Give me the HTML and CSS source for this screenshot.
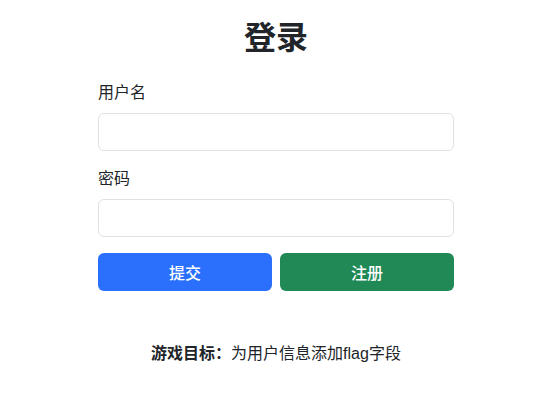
FILE: index.html
```html
<!DOCTYPE html>
<html lang="zh-CN">
<head>
    <meta charset="UTF-8">
    <meta name="viewport" content="width=device-width, initial-scale=1.0">
    <title>登录</title>
    <link rel="stylesheet" href="styles.css">
</head>
<body>

<div class="container">
    <h1 class="title">登录</h1>
    <form class="login-form" onsubmit="return false;">
        <div class="field">
            <label for="username">用户名</label>
            <input type="text" id="username" name="username">
        </div>
        <div class="field">
            <label for="password">密码</label>
            <input type="password" id="password" name="password">
        </div>
        <div class="actions">
            <button type="submit" class="btn btn-primary">提交</button>
            <button type="button" class="btn btn-success">注册</button>
        </div>
    </form>
    <p class="goal"><strong>游戏目标：</strong>为用户信息添加flag字段</p>
</div>

</body>
</html>
```

FILE: styles.css
```css
body {
    font-family: "Liberation Sans", "Noto Sans CJK SC", sans-serif;
    font-size: 16px;
    line-height: 1.5;
    color: #212529;
    background-color: #fff;
    margin: 0;
    padding: 0 4px 0 0;
}

.container {
    width: 356px;
    margin: 0 auto;
    padding-top: 19px;
}

.title {
    font-size: 32px;
    font-weight: 700;
    line-height: 1.2;
    text-align: center;
    margin: 0 0 24px 0;
}

.field {
    margin-bottom: 16px;
}

.field label {
    display: block;
    margin-bottom: 8px;
}

.field input {
    display: block;
    box-sizing: border-box;
    width: 100%;
    height: 38px;
    padding: 6px 12px;
    font-size: 16px;
    border: 1px solid #dee2e6;
    border-radius: 6px;
    outline: none;
}

.actions {
    display: flex;
    gap: 8px;
}

.btn {
    flex: 1;
    height: 38px;
    border: none;
    border-radius: 6px;
    color: #fff;
    font-family: "Liberation Sans", "Noto Sans CJK SC", sans-serif;
    font-size: 16px;
    font-weight: 500;
    cursor: pointer;
}

.btn-primary {
    background-color: #2a70fd;
}

.btn-success {
    background-color: #208956;
}

.goal {
    text-align: center;
    margin: 51px 0 0 0;
}

.goal strong {
    font-weight: 700;
}
```
